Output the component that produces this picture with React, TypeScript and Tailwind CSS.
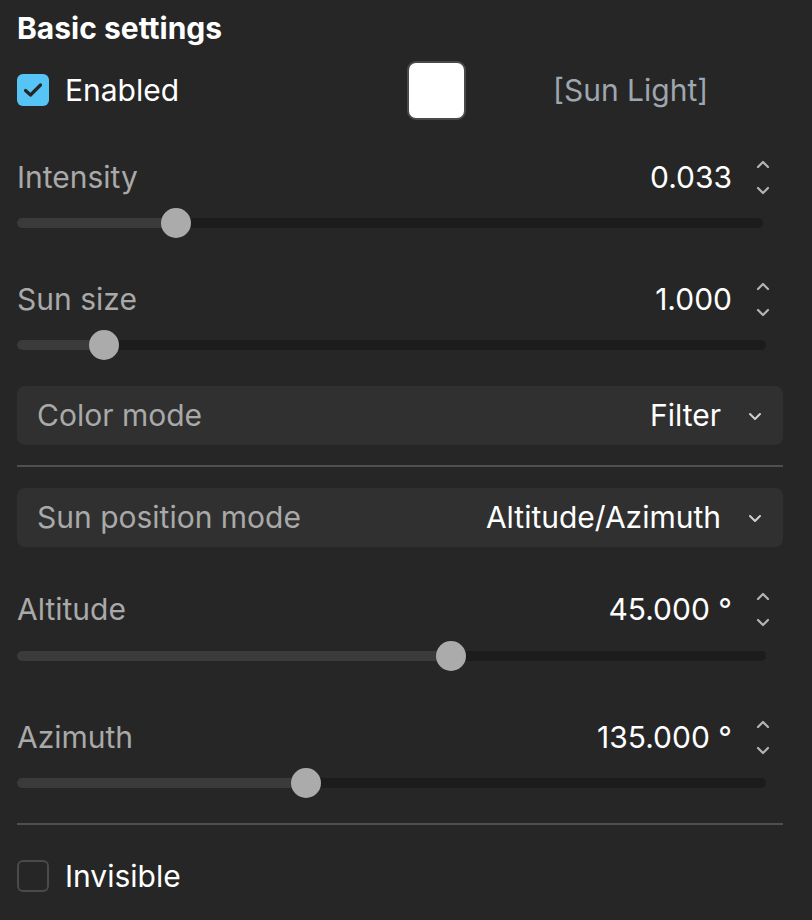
import React from "react";

const font = { fontFamily: "Inter, 'Noto Sans', sans-serif" };

function Spinner() {
  return (
    <div className="flex w-[32px] mr-[4px] flex-col items-center justify-center gap-[17px]">
      <svg width="16" height="10" viewBox="0 0 16 10" fill="none">
        <path d="M3 8 L8 3 L13 8" stroke="#b4b4b4" strokeWidth="2.2" strokeLinecap="round" strokeLinejoin="round" />
      </svg>
      <svg width="16" height="10" viewBox="0 0 16 10" fill="none">
        <path d="M3 2 L8 7 L13 2" stroke="#b4b4b4" strokeWidth="2.2" strokeLinecap="round" strokeLinejoin="round" />
      </svg>
    </div>
  );
}

function Slider({ pos, width }: { pos: number; width: number }) {
  return (
    <div className="relative h-[30px] flex items-center" style={{ width }}>
      <div className="h-[10px] w-full rounded-full bg-[#1c1c1c] overflow-hidden">
        <div className="h-full bg-[#3b3b3b]" style={{ width: pos }} />
      </div>
      <div
        className="absolute top-0 h-[30px] w-[30px] rounded-full bg-[#ababab]"
        style={{ left: pos - 15 }}
      />
    </div>
  );
}

function SliderBlock({
  label,
  value,
  pos,
  width,
  mt,
  gap,
}: {
  label: string;
  value: string;
  pos: number;
  width: number;
  mt: string;
  gap: string;
}) {
  return (
    <div className={mt}>
      <div className="flex h-[40px] items-center justify-between">
        <span className="text-[30px] text-[#a9a9a9]">{label}</span>
        <div className="flex items-center gap-[15px]">
          <span className="text-[30px] text-white">{value}</span>
          <Spinner />
        </div>
      </div>
      <div className={gap}>
        <Slider pos={pos} width={width} />
      </div>
    </div>
  );
}

function Dropdown({ label, value, mt }: { label: string; value: string; mt: string }) {
  return (
    <div className={`${mt} flex h-[59px] items-center justify-between rounded-[8px] bg-[#303030] pl-[20px] pr-[20px]`}>
      <span className="text-[30px] text-[#a9a9a9]">{label}</span>
      <div className="flex items-center gap-[26px]">
        <span className="text-[30px] text-white">{value}</span>
        <svg width="16" height="10" viewBox="0 0 16 10" fill="none">
          <path d="M3 3 L8 8 L13 3" stroke="#d0d0d0" strokeWidth="2" strokeLinecap="round" strokeLinejoin="round" />
        </svg>
      </div>
    </div>
  );
}

export default function App() {
  return (
    <div className="h-[920px] w-[812px] bg-[#262626] pl-[17px] pr-[29px]" style={font}>
      <div className="flex h-[56px] items-center">
        <span className="text-[30px] font-bold text-white">Basic settings</span>
      </div>
      <div className="flex h-[68px] items-center">
        <div className="flex w-[390px] items-center gap-[16px]">
          <div className="flex h-[32px] w-[32px] items-center justify-center rounded-[6px] bg-[#56c5f5]">
            <svg width="24" height="24" viewBox="0 0 24 24" fill="none">
              <path d="M4.5 12.5 L9.5 17 L19.5 7" stroke="#262626" strokeWidth="3.2" strokeLinecap="round" strokeLinejoin="round" />
            </svg>
          </div>
          <span className="text-[30px] text-white">Enabled</span>
        </div>
        <div className="h-[59px] w-[59px] rounded-[9px] border-2 border-[#4a4a4a] bg-white" />
        <span className="ml-[87px] text-[30px] text-[#9ea6b0]">[Sun Light]</span>
      </div>

      <SliderBlock label="Intensity" value="0.033" pos={159} width={746} mt="mt-[33px]" gap="mt-[11px]" />
      <SliderBlock label="Sun size" value="1.000" pos={87} width={749} mt="mt-[41px]" gap="mt-[11px]" />

      <Dropdown label="Color mode" value="Filter" mt="mt-[26px]" />
      <div className="mt-[20px] h-[2px] bg-[#4f4f4f]" />
      <Dropdown label="Sun position mode" value="Altitude/Azimuth" mt="mt-[21px]" />

      <SliderBlock label="Altitude" value="45.000 °" pos={434} width={749} mt="mt-[42px]" gap="mt-[12px]" />
      <SliderBlock label="Azimuth" value="135.000 °" pos={289} width={749} mt="mt-[46px]" gap="mt-[11px]" />

      <div className="mt-[25px] h-[2px] bg-[#4f4f4f]" />
      <div className="mt-[31px] flex h-[40px] items-center gap-[16px]">
        <div className="h-[32px] w-[32px] rounded-[6px] border-2 border-[#4a4a4a]" />
        <span className="text-[30px] text-white">Invisible</span>
      </div>
    </div>
  );
}
